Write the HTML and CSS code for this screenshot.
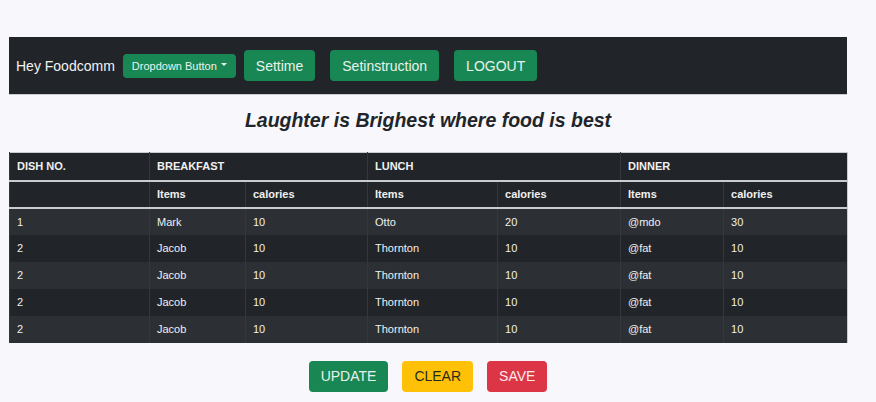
FILE: index.html
```html
<!DOCTYPE html>
<html>
<head>
<meta charset="utf-8">
<link rel="stylesheet" href="styles.css">
</head>
<body>
<div class="page">
  <nav class="navbar">
    <span class="brand">Hey Foodcomm</span>
    <button class="btn btn-green btn-sm">Dropdown Button <span class="caret"></span></button>
    <button class="btn btn-green first">Settime</button>
    <button class="btn btn-green">Setinstruction</button>
    <button class="btn btn-green">LOGOUT</button>
  </nav>
  <h2 class="title">Laughter is Brighest where food is best</h2>
  <table class="menu">
    <colgroup>
      <col style="width:140px"><col style="width:96px"><col style="width:122px"><col style="width:130px"><col style="width:123px"><col style="width:103px"><col style="width:124px">
    </colgroup>
    <thead>
      <tr class="h1"><th>DISH NO.</th><th colspan="2">BREAKFAST</th><th colspan="2">LUNCH</th><th colspan="2">DINNER</th></tr>
      <tr class="h2"><th></th><th>Items</th><th>calories</th><th>Items</th><th>calories</th><th>Items</th><th>calories</th></tr>
    </thead>
    <tbody>
      <tr><td>1</td><td>Mark</td><td>10</td><td>Otto</td><td>20</td><td>@mdo</td><td>30</td></tr>
      <tr><td>2</td><td>Jacob</td><td>10</td><td>Thornton</td><td>10</td><td>@fat</td><td>10</td></tr>
      <tr><td>2</td><td>Jacob</td><td>10</td><td>Thornton</td><td>10</td><td>@fat</td><td>10</td></tr>
      <tr><td>2</td><td>Jacob</td><td>10</td><td>Thornton</td><td>10</td><td>@fat</td><td>10</td></tr>
      <tr><td>2</td><td>Jacob</td><td>10</td><td>Thornton</td><td>10</td><td>@fat</td><td>10</td></tr>
    </tbody>
  </table>
  <div class="actions">
    <button class="btn btn-green">UPDATE</button>
    <button class="btn btn-yellow">CLEAR</button>
    <button class="btn btn-red">SAVE</button>
  </div>
</div>
</body>
</html>
```
FILE: styles.css
```css
* { box-sizing: border-box; }
html, body { margin: 0; padding: 0; }
body {
  background: #f7f7fc;
  font-family: "Liberation Sans", Arial, sans-serif;
  color: #212529;
}
.page {
  width: 838px;
  margin-left: 9px;
  padding-top: 37px;
}
.navbar {
  display: flex;
  align-items: center;
  height: 58px;
  background: #212529;
  padding: 0 7px;
  border-bottom: 1px solid #c9cbd0;
}
.brand {
  color: #f2f2f2;
  font-size: 14px;
  margin-right: 8px;
}
.btn {
  font-family: "Liberation Sans", Arial, sans-serif;
  border: 0;
  border-radius: 4px;
  font-size: 14px;
  height: 31px;
  padding: 0 12px;
  color: #fff;
  cursor: pointer;
  margin-right: 15px;
}
.btn-green { background: #198754; color: #e8f2ec; }
.btn-sm {
  font-size: 11px;
  height: 24px;
  padding: 0 9px;
  margin-right: 8px;
  display: inline-flex;
  align-items: center;
}
.caret {
  display: inline-block;
  margin-left: 4px;
  border-left: 3px solid transparent;
  border-right: 3px solid transparent;
  border-top: 3px solid #e8f2ec;
  position: relative;
  top: -1px;
}
.title {
  margin: 14px 0 20px;
  font-size: 19.5px;
  line-height: 23px;
  font-style: italic;
  font-weight: bold;
  text-align: center;
}
.menu {
  width: 838px;
  border-collapse: collapse;
  table-layout: fixed;
  background: #212529;
  color: #f0f0f0;
  font-size: 11px;
  border-top: 1px solid #c9cbd0;
  border-right: 1px solid #c9cbd0;
}
.menu th, .menu td {
  text-align: left;
  padding: 0 7px;
  border-left: 1px solid #32383e;
  white-space: nowrap;
}
.menu th { font-weight: bold; }
.menu tr.h1 th { height: 28px; border-bottom: 2px solid #c9cbd0; }
.menu tr.h2 th { height: 27px; border-bottom: 2px solid #c9cbd0; }
.menu td { height: 27px; }
.menu tbody tr:nth-child(odd) { background: #2c3034; }
.menu tbody tr:nth-child(even) { background: #212529; }
.actions {
  display: flex;
  justify-content: center;
  padding-top: 18px;
}
.actions .btn { margin: 0 7px; }
.btn-yellow { background: #ffc107; color: #2a2a1a; }
.btn-red { background: #dc3545; color: #fbe9eb; }
```
